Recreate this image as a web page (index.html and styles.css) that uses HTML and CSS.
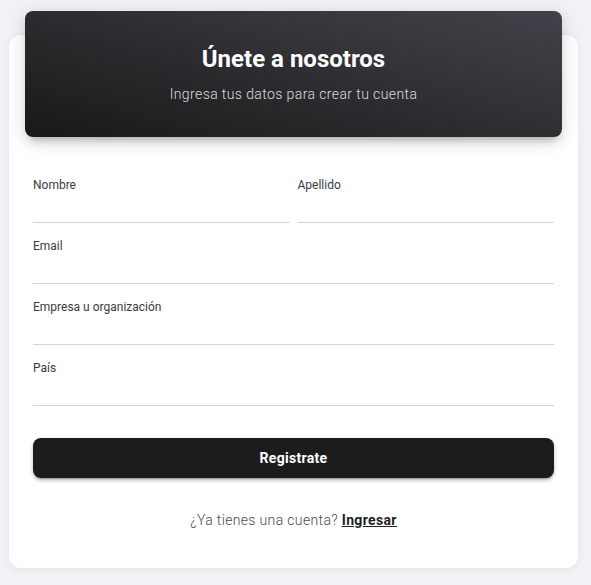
FILE: index.html
```html
<!DOCTYPE html>
<html lang="es">
<head>
<meta charset="utf-8">
<title>Registro</title>
<link rel="stylesheet" href="styles.css">
</head>
<body>
<main class="page">
  <section class="card">
    <header class="card-header">
      <h1 class="title">Únete a nosotros</h1>
      <p class="subtitle">Ingresa tus datos para crear tu cuenta</p>
    </header>
    <form class="card-body">
      <div class="row">
        <div class="field">
          <label class="label" for="nombre">Nombre</label>
          <input class="input" id="nombre" type="text">
        </div>
        <div class="field">
          <label class="label" for="apellido">Apellido</label>
          <input class="input" id="apellido" type="text">
        </div>
      </div>
      <div class="field">
        <label class="label" for="email">Email</label>
        <input class="input" id="email" type="email">
      </div>
      <div class="field">
        <label class="label" for="empresa">Empresa u organización</label>
        <input class="input" id="empresa" type="text">
      </div>
      <div class="field">
        <label class="label" for="pais">País</label>
        <input class="input" id="pais" type="text">
      </div>
      <button class="btn" type="button">Registrate</button>
      <p class="footer-text">¿Ya tienes una cuenta? <a class="link" href="#">Ingresar</a></p>
    </form>
  </section>
</main>
</body>
</html>
```
FILE: styles.css
```css
* { box-sizing: border-box; }
html, body { margin: 0; padding: 0; }
body {
  background: #f0f2f5;
  font-family: Roboto, "Liberation Sans", sans-serif;
  color: #344767;
}
.page {
  padding: 35px 13px 19px 9px;
}
.card {
  background: #fff;
  border-radius: 12px;
  box-shadow: 0 2px 8px rgba(0, 0, 0, 0.06);
}
.card-header {
  margin: 0 16px;
  transform: translateY(-24px);
  margin-bottom: -24px;
  height: 126px;
  border-radius: 8px;
  background: linear-gradient(195deg, #42424a 0%, #191919 100%);
  box-shadow: 0 4px 20px 0 rgba(0, 0, 0, 0.14), 0 7px 10px -5px rgba(64, 64, 64, 0.4);
  text-align: center;
  padding-top: 33px;
  color: #fff;
}
.title {
  margin: 0;
  font-size: 24px;
  font-weight: 700;
  line-height: 30px;
  letter-spacing: 0;
}
.subtitle {
  margin: 10px 0 0;
  font-size: 14px;
  font-weight: 300;
  line-height: 20px;
  color: rgba(255, 255, 255, 0.85);
  letter-spacing: 0.4px;
}
.card-body {
  padding: 39px 24px 38px;
  display: flex;
  flex-direction: column;
}
.row {
  display: grid;
  grid-template-columns: 1fr 1fr;
  column-gap: 8px;
}
.field {
  display: flex;
  flex-direction: column;
  margin-bottom: 14px;
}
.label {
  font-size: 12px;
  line-height: 18px;
  color: #3b3b3b;
}
.input {
  border: 0;
  border-bottom: 1px solid #d2d6da;
  height: 29px;
  padding: 0;
  background: transparent;
  font: inherit;
  outline: none;
}
.btn {
  margin-top: 18px;
  height: 40px;
  border: 0;
  border-radius: 8px;
  background: #1c1c1c;
  color: #fff;
  font-family: Roboto, "Liberation Sans", sans-serif;
  font-size: 14px;
  font-weight: 700;
  letter-spacing: 0.3px;
  box-shadow: 0 3px 3px 0 rgba(0, 0, 0, 0.15), 0 3px 1px -2px rgba(0, 0, 0, 0.2), 0 1px 5px 0 rgba(0, 0, 0, 0.15);
  cursor: pointer;
}
.footer-text {
  margin: 32px 0 0;
  text-align: center;
  font-size: 14px;
  line-height: 20px;
  font-weight: 300;
  color: #4a4a4a;
  letter-spacing: 0.35px;
}
.link {
  color: #1f1f1f;
  font-weight: 700;
  text-decoration: underline;
}
```
